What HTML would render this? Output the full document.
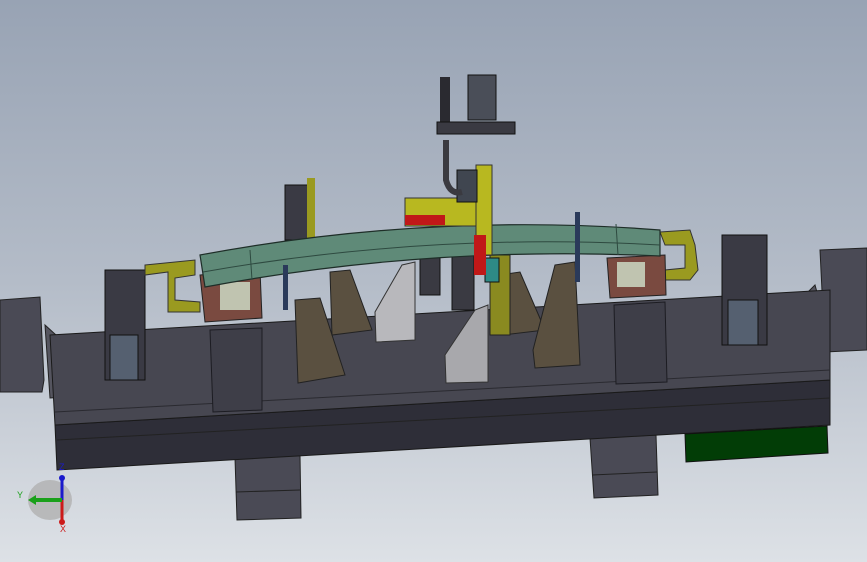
<!DOCTYPE html>
<html><head><meta charset="utf-8"><style>
html,body{margin:0;padding:0;width:867px;height:562px;overflow:hidden}
svg{display:block}
</style></head><body>
<svg width="867" height="562" viewBox="0 0 867 562" xmlns="http://www.w3.org/2000/svg" font-family="Liberation Sans, sans-serif">
<defs>
<linearGradient id="bg" x1="0" y1="0" x2="0" y2="1">
<stop offset="0" stop-color="#98a3b4"/><stop offset="0.5" stop-color="#b4bcc8"/><stop offset="1" stop-color="#dde1e6"/>
</linearGradient>
</defs>
<rect width="867" height="562" fill="url(#bg)"/>
<!-- legs -->
<polygon points="235,458 300,455 301,518 237,520" fill="#4a4a55" stroke="#222" stroke-width="1"/>
<line x1="236" y1="492" x2="300" y2="490" stroke="#222"/>
<polygon points="590,438 656,435 658,495 594,498" fill="#4a4a55" stroke="#222"/>
<line x1="592" y1="475" x2="657" y2="472" stroke="#222"/>
<!-- left end bracket -->
<polygon points="0,300 40,297 44,380 42,392 0,392" fill="#4a4a55" stroke="#222"/>
<polygon points="45,325 100,375 105,395 50,398" fill="#55555f" stroke="#222"/>
<!-- right end bracket -->
<polygon points="820,250 867,248 867,350 825,352" fill="#4a4a55" stroke="#222"/>
<polygon points="770,330 815,285 830,340 772,355" fill="#55555f" stroke="#222"/>
<!-- main body front -->
<polygon points="55,425 830,380 830,425 57,470" fill="#2e2e38" stroke="#1a1a1a"/>
<line x1="57" y1="440" x2="830" y2="398" stroke="#222"/>
<!-- green block -->
<polygon points="685,434 827,426 828,453 686,462" fill="#023d06" stroke="#111"/>
<!-- main body top -->
<polygon points="50,335 830,290 830,380 55,425" fill="#474751" stroke="#1a1a1a"/>
<line x1="55" y1="412" x2="830" y2="370" stroke="#2a2a30"/>
<!-- pillars -->
<polygon points="210,330 262,328 262,410 213,412" fill="#3e3e48" stroke="#1c1c22"/>
<polygon points="614,305 665,302 667,382 616,384" fill="#3e3e48" stroke="#1c1c22"/>
<!-- triangle brackets dark -->
<polygon points="295,300 320,298 345,375 298,383" fill="#5a5040" stroke="#222"/>
<polygon points="330,272 350,270 372,330 332,335" fill="#5a5040" stroke="#222"/>
<polygon points="500,275 520,272 545,330 503,335" fill="#5a5040" stroke="#222"/>
<polygon points="555,265 575,262 580,365 535,368 533,350" fill="#5a5040" stroke="#222"/>
<!-- light brackets -->
<polygon points="375,312 402,265 415,262 415,340 376,342" fill="#b8b8bc" stroke="#333"/>
<polygon points="445,355 475,310 488,305 488,382 446,383" fill="#a8a8ac" stroke="#333"/>
<!-- vertical mid mech -->
<rect x="452" y="250" width="22" height="60" fill="#3a3a42" stroke="#111"/>
<rect x="420" y="255" width="20" height="40" fill="#3a3a42" stroke="#111"/>
<rect x="490" y="255" width="20" height="80" fill="#8a8a20" stroke="#222"/>
<rect x="485" y="258" width="14" height="24" fill="#2e8a86" stroke="#111"/>
<!-- left clamp -->
<rect x="105" y="270" width="40" height="110" fill="#3a3a44" stroke="#111"/>
<rect x="110" y="335" width="28" height="45" fill="#556070" stroke="#111"/>
<path d="M145,265 L195,260 L195,275 L175,278 L175,300 L200,302 L200,312 L168,312 L168,272 L145,275Z" fill="#9a9a20" stroke="#333"/>
<polygon points="200,275 260,270 262,318 205,322" fill="#7a4a40" stroke="#222"/>
<rect x="220" y="282" width="30" height="28" fill="#c0c4b0"/>
<!-- right clamp -->
<rect x="722" y="235" width="45" height="110" fill="#3a3a44" stroke="#111"/>
<rect x="728" y="300" width="30" height="45" fill="#556070" stroke="#111"/>
<path d="M660,232 L690,230 L695,245 L698,270 L690,280 L665,280 L665,270 L685,268 L685,245 L665,245Z" fill="#9a9a20" stroke="#333"/>
<polygon points="607,258 665,255 666,295 610,298" fill="#7a4a40" stroke="#222"/>
<rect x="617" y="262" width="28" height="25" fill="#c0c4b0"/>
<!-- upper left cylinder -->
<rect x="285" y="185" width="25" height="55" fill="#3a3a44" stroke="#111"/>
<rect x="307" y="178" width="8" height="60" fill="#9a9a20"/>
<!-- beam -->
<path d="M200,255 Q430,212 660,230 L660,256 Q430,245 205,287Z" fill="#5f8a78" stroke="#1e2e28" stroke-width="1.2"/>
<path d="M203,272 Q430,232 660,245" fill="none" stroke="#2e4a40" stroke-width="1"/>
<line x1="250" y1="250" x2="252" y2="280" stroke="#2e4a40"/>
<line x1="616" y1="224" x2="618" y2="255" stroke="#2e4a40"/>
<!-- blue posts -->
<rect x="283" y="265" width="5" height="45" fill="#2a3a5a"/>
<rect x="575" y="212" width="5" height="70" fill="#2a3a5a"/>
<!-- top mechanism -->
<rect x="405" y="198" width="72" height="28" fill="#b8b820" stroke="#333"/>
<rect x="405" y="215" width="40" height="10" fill="#c01818"/>
<rect x="476" y="165" width="16" height="90" fill="#b8b820" stroke="#333"/>
<rect x="474" y="235" width="12" height="40" fill="#c01818"/>
<rect x="457" y="170" width="20" height="32" fill="#404650" stroke="#111"/>
<path d="M446,140 L446,180 Q450,195 462,192" fill="none" stroke="#3a3a40" stroke-width="6"/>
<rect x="440" y="77" width="10" height="50" fill="#2a2a30"/>
<rect x="437" y="122" width="78" height="12" fill="#3a3a42" stroke="#111"/>
<rect x="468" y="75" width="28" height="45" fill="#4a4e58" stroke="#111"/>
<!-- axis triad -->
<ellipse cx="50" cy="500" rx="22" ry="20" fill="#b0b0b0" opacity="0.8"/>
<line x1="62" y1="478" x2="62" y2="500" stroke="#1a1acc" stroke-width="3"/>
<line x1="62" y1="500" x2="62" y2="522" stroke="#cc1a1a" stroke-width="3"/>
<line x1="62" y1="500" x2="35" y2="500" stroke="#1aa01a" stroke-width="4"/>
<polygon points="28,500 36,495 36,505" fill="#1aa01a"/>
<circle cx="62" cy="478" r="3" fill="#1a1acc"/>
<circle cx="62" cy="522" r="3" fill="#cc1a1a"/>
<text x="59" y="470" font-size="9" fill="#1a1acc">Z</text>
<text x="17" y="498" font-size="9" fill="#1aa01a">Y</text>
<text x="60" y="532" font-size="9" fill="#cc1a1a">X</text>
</svg>
</body></html>
